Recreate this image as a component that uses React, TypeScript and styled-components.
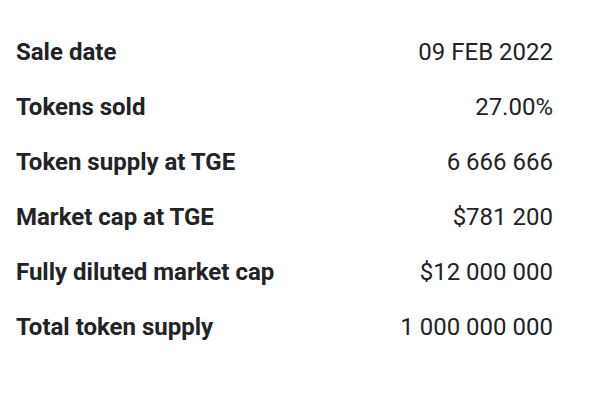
import React from "react";
import styled, { createGlobalStyle } from "styled-components";

const Global = createGlobalStyle`
  html, body { margin: 0; padding: 0; background: #ffffff; }
  body { font-family: Roboto, "Liberation Sans", sans-serif; color: #222326; }
`;

const Table = styled.div`
  display: flex;
  flex-direction: column;
  padding: 24px 43px 0 16px;
`;

const Row = styled.div`
  display: flex;
  justify-content: space-between;
  align-items: center;
  height: 55px;
  font-size: 24px;
  line-height: 48px;
`;

const Label = styled.span`
  font-weight: 700;
`;

const Value = styled.span`
  font-weight: 400;
  text-align: right;
`;

const rows: [string, string][] = [
  ["Sale date", "09 FEB 2022"],
  ["Tokens sold", "27.00%"],
  ["Token supply at TGE", "6 666 666"],
  ["Market cap at TGE", "$781 200"],
  ["Fully diluted market cap", "$12 000 000"],
  ["Total token supply", "1 000 000 000"],
];

export default function App() {
  return (
    <>
      <Global />
      <Table>
        {rows.map(([l, v]) => (
          <Row key={l}>
            <Label>{l}</Label>
            <Value>{v}</Value>
          </Row>
        ))}
      </Table>
    </>
  );
}
